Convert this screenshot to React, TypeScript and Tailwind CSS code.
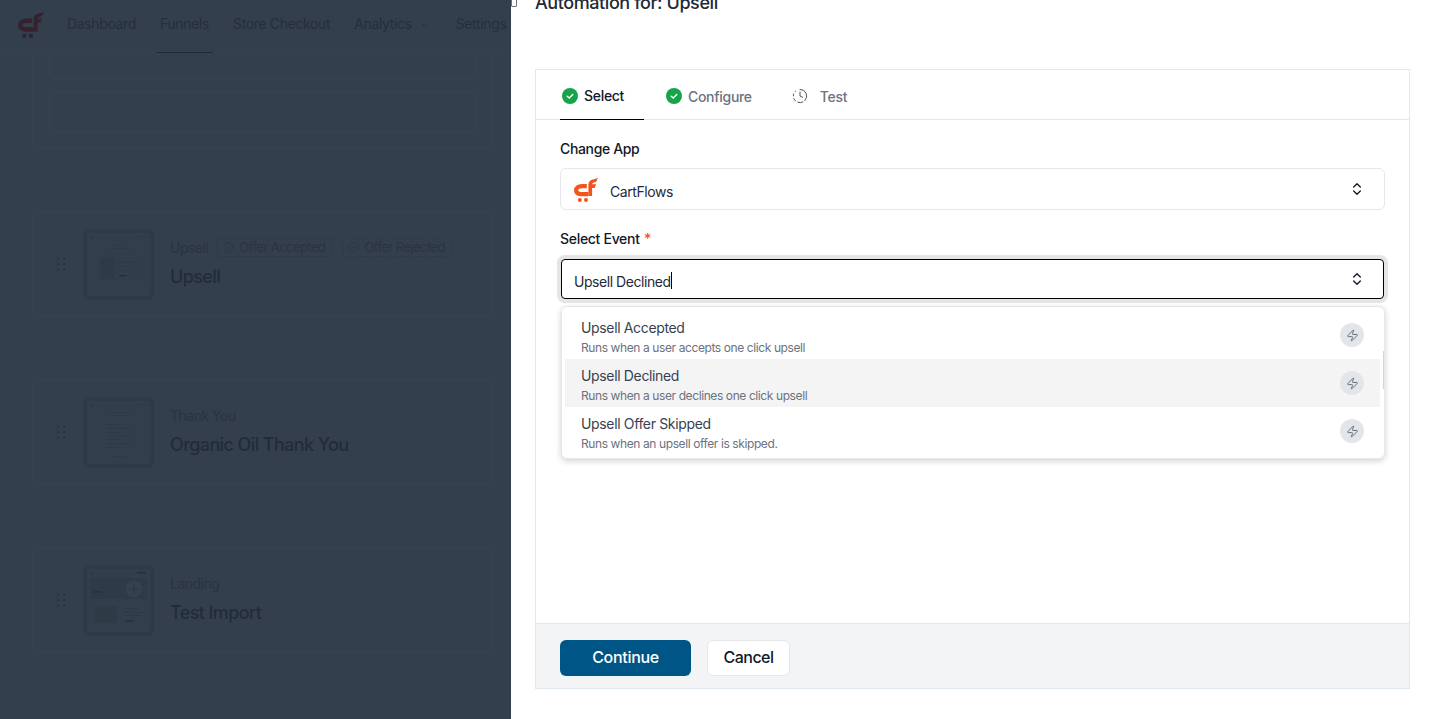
import { ChevronDown, ChevronsUpDown, ClockFading, Zap, CircleCheck, CircleDot } from "lucide-react";

const font = "font-['Inter','Liberation_Sans',sans-serif]";

function Logo({ size, className }: { size: number; className: string }) {
  return (
    <svg width={size} height={size} viewBox="0 0 24 24" fill="none" className={className}>
      <path d="M12.8 8.1H8C4 8.1 2.1 10 2.1 12.2C2.1 14.6 4 16.1 8 16.1H14.4" stroke="currentColor" strokeWidth="4.2" fill="none" />
      <path d="M14.4 18V7C14.4 3 17 1.7 20 1.2L24 0L22 4C20 4.4 18.3 4.6 18.1 6.2H22.2L20.6 10H18.1V18Z" fill="currentColor" />
      <circle cx="5.8" cy="22" r="2" fill="currentColor" />
      <circle cx="12" cy="22" r="2" fill="currentColor" />
    </svg>
  );
}

function Grip() {
  return (
    <svg width="8" height="13" viewBox="0 0 8 13" className="text-[#232d3a] shrink-0">
      {[0, 5.5, 11].map((y) => (
        <g key={y}>
          <rect x="0" y={y} width="1.5" height="1.5" fill="currentColor" />
          <rect x="6.4" y={y} width="1.5" height="1.5" fill="currentColor" />
        </g>
      ))}
    </svg>
  );
}

function Thumb({ kind }: { kind: "upsell" | "thanks" | "landing" }) {
  return (
    <div className="w-[71px] h-[71px] shrink-0 rounded-md border-[4px] border-[#2f3a47] bg-[#323e4c]">
      <svg width="63" height="63" viewBox="0 0 63 63">
        <rect x="3" y="3" width="3" height="3" fill="#2e3946" />
        <rect x="50" y="3" width="9" height="1.5" fill={kind === "landing" ? "#262f3c" : "#2f3a47"} />
        {kind === "upsell" && (
          <g>
            <rect x="27" y="12" width="10" height="1" fill="#2e3946" />
            <rect x="22" y="15" width="20" height="1" fill="#2f3a47" />
            <rect x="13" y="25" width="40" height="21" rx="1" fill="#323e4c" stroke="#303c49" />
            <rect x="13" y="25" width="15" height="21" fill="#2f3a47" />
            <rect x="31" y="29" width="18" height="1" fill="#2e3946" />
            <rect x="31" y="33" width="14" height="1" fill="#2e3946" />
            <rect x="31" y="37" width="5" height="1" fill="#2e3946" />
            <rect x="32" y="42" width="8" height="1.5" fill="#262f3c" />
          </g>
        )}
        {kind === "thanks" && (
          <g>
            <rect x="23" y="11" width="17" height="1" fill="#2e3946" />
            <rect x="20" y="14" width="23" height="1" fill="#303b48" />
            {[23, 27, 31, 34, 38, 42, 46].map((y, i) => (
              <rect key={y} x="20" y={y} width={i % 2 ? 24 : 14} height="1" fill="#2e3946" />
            ))}
            <rect x="26" y="55" width="12" height="1" fill="#2e3946" />
          </g>
        )}
        {kind === "landing" && (
          <g>
            <rect x="3" y="9" width="57" height="21" fill="#2f3a47" />
            <circle cx="47" cy="20" r="8.5" fill="#35414e" />
            <path d="M47 13.5L48 19L53.5 20L48 21L47 26.5L46 21L40.5 20L46 19Z" fill="#2f3a47" />
            <rect x="7" y="22" width="8" height="1.5" fill="#262f3c" />
            <rect x="7" y="26" width="12" height="1" fill="#2e3946" />
            <rect x="8" y="37" width="22" height="17" fill="#2f3a47" />
            <rect x="37" y="39" width="14" height="1" fill="#2e3946" />
            <rect x="37" y="43" width="20" height="1" fill="#2e3946" />
            <rect x="37" y="46" width="17" height="1" fill="#2e3946" />
            <rect x="38" y="51" width="8" height="1.5" fill="#262f3c" />
          </g>
        )}
      </svg>
    </div>
  );
}

function StepCard({ kind, label, title, badges }: { kind: "upsell" | "thanks" | "landing"; label: string; title: string; badges?: boolean }) {
  return (
    <div className="h-[105px] rounded-md border border-[#37434f] pl-6 flex items-center">
      <Grip />
      <div className="w-[18px] shrink-0" />
      <Thumb kind={kind} />
      <div className="ml-[16px] flex flex-col gap-[6px]">
        <div className="flex items-center h-[19px] gap-[9px] text-[14px] tracking-[-0.5px] text-[#2a3441] whitespace-nowrap">
          <span>{label}</span>
          {badges && (
            <>
              <span className="flex items-center gap-[5px] h-[19px] w-[116px] pl-[5px] border border-[#2f3a47] rounded text-[13px] tracking-[-0.55px] leading-none">
                <CircleCheck size={11} strokeWidth={1.5} />
                Offer Accepted
              </span>
              <span className="flex items-center gap-[5px] h-[19px] w-[111px] pl-[5px] border border-dashed border-[#2f3a47] rounded text-[13px] tracking-[-0.55px] leading-none">
                <CircleDot size={11} strokeWidth={1.5} />
                Offer Rejected
              </span>
            </>
          )}
        </div>
        <div className="text-[18px] leading-[28px] font-medium tracking-[-0.6px] text-[#222c39] whitespace-nowrap">{title}</div>
      </div>
    </div>
  );
}

function LeftPanel() {
  return (
    <div className="w-[511px] shrink-0 h-full bg-[#333f4d] overflow-hidden">
      <div className="h-[53px] flex items-start border-b border-[#36424f] pl-[18px] whitespace-nowrap text-[14px] tracking-[-0.36px] text-[#252f3c]">
        <Logo size={26} className="text-[#36222f] mt-[12px] shrink-0" />
        <div className="ml-[23px] flex gap-[24px]">
          <span className="h-[53px] leading-[48px]">Dashboard</span>
          <span className="h-[53px] leading-[48px] relative">
            Funnels
            <span className="absolute left-[-4px] right-[-4px] top-[52px] h-px bg-[#222c38]" />
          </span>
          <span className="h-[53px] leading-[48px]">Store Checkout</span>
          <span className="h-[53px] leading-[48px] flex items-start gap-[6px]">
            Analytics
            <ChevronDown size={14} strokeWidth={1.5} className="mt-[18px]" />
          </span>
          <span className="h-[53px] leading-[48px]">Settings</span>
        </div>
      </div>
      <div className="pl-[32px] pr-[18px]">
        <div className="h-[95px] rounded-b-md border-x border-b border-[#37434f] px-[16px] flex flex-col">
          <div className="h-[26px] border-x border-b border-[#37434f] rounded-b" />
          <div className="h-[41px] mt-[12px] border border-[#37434f] rounded" />
        </div>
        <div className="mt-[64px] flex flex-col gap-[63px]">
          <StepCard kind="upsell" label="Upsell" title="Upsell" badges />
          <StepCard kind="thanks" label="Thank You" title="Organic Oil Thank You" />
          <StepCard kind="landing" label="Landing" title="Test Import" />
        </div>
      </div>
    </div>
  );
}

function GreenCheck() {
  return (
    <svg width="16" height="16" viewBox="0 0 16 16" className="shrink-0">
      <circle cx="8" cy="8" r="8" fill="#16a34a" />
      <path d="M5.2 8.2L7.2 10L10.8 6.4" stroke="#fff" strokeWidth="1.4" fill="none" strokeLinecap="round" strokeLinejoin="round" />
    </svg>
  );
}

const options = [
  { title: "Upsell Accepted", sub: "Runs when a user accepts one click upsell" },
  { title: "Upsell Declined", sub: "Runs when a user declines one click upsell", active: true },
  { title: "Upsell Offer Skipped", sub: "Runs when an upsell offer is skipped." },
];

function RightPanel() {
  return (
    <div className="relative flex-1 h-full bg-white flex flex-col overflow-hidden">
      <span className="absolute left-0 top-[-3px] w-[6px] h-[10px] border border-[#6b7280] bg-white rounded-[1px]" />
      <div className="h-[69px] pl-[24px] shrink-0">
        <h2 className="text-[18px] leading-[28px] -mt-[11px] font-medium text-[#1f2937] tracking-[-0.42px] whitespace-nowrap">Automation for: Upsell</h2>
      </div>
      <div className="ml-[24px] mr-[20px] h-[620px] border border-[#e2e8f0] flex flex-col">
        <div className="h-[50px] shrink-0 border-b border-[#e5e7eb] flex pl-[24px] gap-[20px] text-[14px] font-medium tracking-[-0.3px]">
          <div className="w-[84px] h-[50px] pt-[2px] border-b-[1.5px] border-black flex items-center gap-[6px] pl-[2px] text-[#111827]">
            <GreenCheck />
            Select
          </div>
          <div className="h-[50px] pt-[2px] flex items-center gap-[6px] pl-[2px] text-[#6b7280]">
            <GreenCheck />
            Configure
          </div>
          <div className="h-[50px] pt-[2px] flex items-center gap-[12px] pl-[20px] text-[#6b7280]">
            <ClockFading size={16} strokeWidth={1.5} className="text-[#4b5563]" />
            Test
          </div>
        </div>
        <div className="flex-1 px-[24px] pt-[19px] relative">
          <div className="text-[14px] leading-[19px] font-medium tracking-[-0.35px] text-[#111827]">Change App</div>
          <div className="mt-[10px] h-[42px] rounded-md border border-[#e5e7eb] flex items-center pl-[13px] pr-[19px]">
            <Logo size={24} className="text-[#f2541b] shrink-0 mt-[2px]" />
            <span className="ml-[12px] mt-[4px] text-[14px] tracking-[-0.42px] text-[#1f2937]">CartFlows</span>
            <ChevronsUpDown size={16} strokeWidth={2} className="ml-auto text-[#111827]" />
          </div>
          <div className="mt-[19px] text-[14px] leading-[20px] font-medium tracking-[-0.3px] text-[#111827]">
            Select Event <span className="ml-[1px] text-[#f2541b]">*</span>
          </div>
          <div className="mt-[10px] mx-[1px] h-[40px] rounded-[4px] border border-black ring-4 ring-[#e5e5e5] flex items-center pl-[12px] pr-[18px] bg-white">
            <span className="mt-[4px] text-[14px] tracking-[-0.45px] text-[#1f2937]">Upsell Declined</span>
            <span className="w-px h-[17px] mt-[3px] bg-black" />
            <ChevronsUpDown size={16} strokeWidth={2} className="ml-auto text-[#111827]" />
          </div>
          <div className="absolute left-[25px] top-[186px] w-[824px] h-[153px] bg-white rounded-md border border-[#e5e7eb] shadow-[0_2px_6px_rgba(0,0,0,0.18)] pl-[3px] pr-[4px] py-[4px]">
            {options.map((o) => (
              <div key={o.title} className={`h-[48px] pl-[16px] pr-[16px] flex items-center justify-between ${o.active ? "bg-[#f4f4f5]" : ""}`}>
                <div className="flex flex-col pt-[2px]">
                  <span className="text-[14px] leading-[20px] tracking-[-0.35px] text-[#374151]">{o.title}</span>
                  <span className="mt-[2px] -mb-[2px] text-[12px] leading-[16px] tracking-[-0.4px] text-[#6b7280]">{o.sub}</span>
                </div>
                <span className="w-[24px] h-[24px] rounded-full bg-[#e2e6ea] flex items-center justify-center">
                  <Zap size={13} strokeWidth={1.5} className="text-[#475569]" />
                </span>
              </div>
            ))}
            <span className="absolute right-0 top-[44px] w-px h-[38px] bg-[#d1d5db]" />
          </div>
        </div>
        <div className="h-[65px] pt-[3px] shrink-0 border-t border-[#e2e8f0] bg-[#f3f4f6] flex items-center pl-[24px] gap-[16px] text-[16px] tracking-[-0.3px]">
          <button className="w-[131px] h-[36px] pb-[2px] rounded-md bg-[#005587] text-white font-medium">Continue</button>
          <button className="w-[83px] h-[36px] pb-[2px] rounded-md bg-white border border-[#e5e7eb] text-[#111827] font-medium tracking-[-0.5px]">Cancel</button>
        </div>
      </div>
    </div>
  );
}

export default function App() {
  return (
    <div className={`w-full h-[719px] flex overflow-hidden ${font}`}>
      <LeftPanel />
      <RightPanel />
    </div>
  );
}
